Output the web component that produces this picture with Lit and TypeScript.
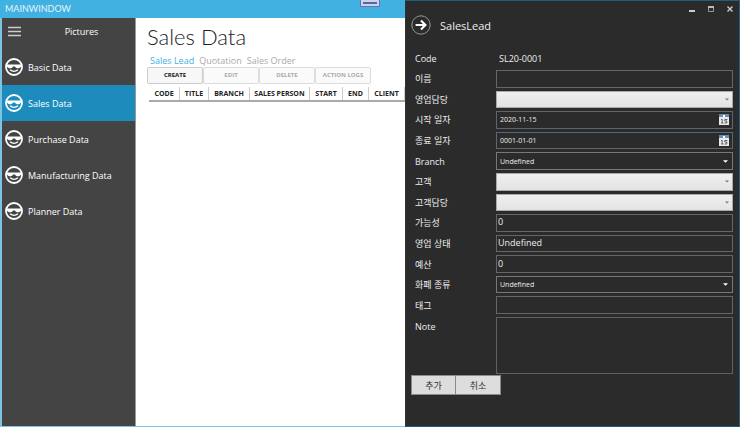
import { LitElement, html, css, svg, nothing } from "lit";
import { customElement, property, state } from "lit/decorators.js";
import { classMap } from "lit/directives/class-map.js";
import { styleMap } from "lit/directives/style-map.js";

const face = svg`
  <circle cx="9" cy="9" r="8" fill="none" stroke="#fff" stroke-width="1.8"></circle>
  <path d="M2 6.4 H16 V8.2 C15.2 10.8 11 11.2 9.9 8.6 H8.1 C7 11.2 2.8 10.8 2 8.2 Z" fill="#fff"></path>
  <path d="M5 11.8 Q9 15 13 11.8" fill="none" stroke="#fff" stroke-width="1.4"></path>`;

interface Field {
  id: string;
  label: string;
  kind: "text" | "light" | "dark" | "date";
  value?: string;
}

const fields: Field[] = [
  { id: "name", label: "이름", kind: "text" },
  { id: "sales", label: "영업담당", kind: "light" },
  { id: "start", label: "시작 일자", kind: "date", value: "2020-11-15" },
  { id: "end", label: "종료 일자", kind: "date", value: "0001-01-01" },
  { id: "branch", label: "Branch", kind: "dark", value: "Undefined" },
  { id: "client", label: "고객", kind: "light" },
  { id: "contact", label: "고객담당", kind: "light" },
  { id: "chance", label: "가능성", kind: "text", value: "0" },
  { id: "status", label: "영업 상태", kind: "text", value: "Undefined" },
  { id: "budget", label: "예산", kind: "text", value: "0" },
  { id: "currency", label: "화폐 종류", kind: "dark", value: "Undefined" },
  { id: "tag", label: "태그", kind: "text" },
];

const columns = [
  { name: "CODE", width: 31 },
  { name: "TITLE", width: 29 },
  { name: "BRANCH", width: 41 },
  { name: "SALES PERSON", width: 60 },
  { name: "START", width: 33 },
  { name: "END", width: 26 },
  { name: "CLIENT", width: 36 },
];

const reset = css`
  * { box-sizing: border-box; }
  button, input, select, textarea {
    font: inherit; color: inherit; margin: 0; padding: 0; border: 0;
    border-radius: 0; background: none; appearance: none; outline: none;
  }
`;

@customElement("side-nav")
export class SideNav extends LitElement {
  @state() current = "Sales Data";
  items = ["Basic Data", "Sales Data", "Purchase Data", "Manufacturing Data", "Planner Data"];

  static styles = [reset, css`
    :host { display: block; background: #444; color: #fff; border-right: 1px solid #999; }
    .head { display: flex; align-items: center; height: 31px; padding: 0 5px 4px 6px; }
    .menu { display: flex; width: 13px; height: 11px; }
    .title { flex: 1; text-align: center; padding-left: 12px; }
    .item {
      display: flex; align-items: center; gap: 5px; height: 36px; padding: 0 3px;
      color: #fff; text-decoration: none; white-space: nowrap;
    }
    .active { background: #1d8cbd; }
  `];

  render() {
    return html`
      <div class="head">
        <button class="menu" aria-label="Menu">
          <svg width="13" height="11" viewBox="0 0 13 11">
            <path d="M0 1.5H13M0 5.5H13M0 9.5H13" stroke="#ccc" stroke-width="1.4"></path>
          </svg>
        </button>
        <span class="title">Pictures</span>
      </div>
      <nav>
        ${this.items.map((t) => html`
          <a href="#" class=${classMap({ item: true, active: t === this.current })}
            @click=${() => (this.current = t)}>
            <svg width="18" height="18" viewBox="0 0 18 18">${face}</svg>${t}
          </a>`)}
      </nav>`;
  }
}

@customElement("sales-view")
export class SalesView extends LitElement {
  static styles = [reset, css`
    :host { display: block; min-width: 0; overflow: hidden; padding: 0 0 0 11px; }
    h1 {
      margin: 0; padding-top: 2px; font-family: Lato, "Open Sans", sans-serif;
      font-size: 22px; font-weight: 300; line-height: 34px; color: #222;
    }
    .tabs { display: flex; gap: 5px; padding-left: 3px; line-height: 14px; }
    .tabs a { color: #aaa; text-decoration: none; white-space: nowrap; }
    .tabs .on { color: #41b1e1; }
    .bar { display: flex; padding-bottom: 3px; margin-top: -1px; font-size: 6px; font-weight: 700; }
    .bar button {
      width: 56px; height: 17px; border: 1px solid #ddd; border-radius: 2px;
      background: #fafafa; color: #aaa;
    }
    .bar button:first-child { background: #f7f7f7; border-color: #ccc; color: #111; }
    table {
      table-layout: fixed; width: 256px; margin-left: 2px; border-collapse: separate;
      border-spacing: 0; font-size: 7px; line-height: 13px; color: #222;
    }
    th { padding: 0; text-align: center; white-space: nowrap; border-right: 1px solid #ccc; }
    thead { box-shadow: 0 2px 0 #aaa; }
  `];

  render() {
    return html`
      <h1>Sales Data</h1>
      <nav class="tabs">
        <a class="on" href="#">Sales Lead</a><a href="#">Quotation</a><a href="#">Sales Order</a>
      </nav>
      <div class="bar">
        <button>CREATE</button><button disabled>EDIT</button>
        <button disabled>DELETE</button><button disabled>ACTION LOGS</button>
      </div>
      <table>
        <colgroup>${columns.map((c) => html`<col style=${styleMap({ width: c.width + "px" })}>`)}</colgroup>
        <thead><tr>${columns.map((c) => html`<th scope="col">${c.name}</th>`)}</tr></thead>
      </table>`;
  }
}

@customElement("lead-flyout")
export class LeadFlyout extends LitElement {
  @property() code = "SL20-0001";

  static styles = [reset, css`
    :host {
      display: block; background: #2b2b2b; color: #eee; padding: 0 6px 0 5px;
      border: 1px solid #1f5f7c; border-left: 1px solid #333;
    }
    .window { display: flex; justify-content: flex-end; gap: 13px; height: 14px; }
    .window button { width: 6px; height: 15px; display: grid; place-items: center; }
    .head { display: flex; align-items: center; gap: 9px; height: 20px; font-size: 11px; }
    .back { width: 20px; height: 20px; }
    .back svg { display: block; }
    h2 { margin: 0; font: inherit; }
    .form { display: grid; grid-template-columns: 81px minmax(0, 1fr); row-gap: 3px; padding: 14px 0 1px 4px; }
    .row { display: grid; grid-column: 1 / -1; grid-template-columns: subgrid; }
    .code { height: 18px; align-items: center; }
    .code output { padding-left: 3px; }
    .fields {
      display: grid; grid-column: 1 / -1; grid-template-columns: subgrid;
      grid-template-rows: repeat(12, minmax(0, 1fr)); row-gap: 3px; height: 244px;
    }
    label { align-self: center; }
    .box { display: flex; min-width: 0; min-height: 0; border: 1px solid #666; }
    .box input { flex: 1; min-width: 0; }
    .text { padding: 0 1px 2px; }
    .date { border-color: #5a6670; padding: 0 3px 1px 3px; align-items: center; font-size: 7px; }
    .date button { width: 10px; height: 11px; }
    .date svg { display: block; }
    .pick { display: grid; align-items: center; font-size: 7px; border-color: #777; }
    .pick select { grid-area: 1 / 1; width: 100%; height: 100%; padding-left: 3px; }
    .pick svg { grid-area: 1 / 1; justify-self: end; margin-right: 4px; pointer-events: none; }
    .light { border-color: #aaa; background: linear-gradient(#f0f0f0, #e3e3e3); color: #333; }
    .light svg { margin-right: 3px; }
    .note label { align-self: start; line-height: 19px; }
    .note textarea { display: block; width: 100%; height: 57px; border: 1px solid #606060; resize: none; }
    .actions { display: flex; }
    .actions button {
      width: 45px; height: 20px; background: #ddd; color: #333; border: 1px solid #8a8a8a;
    }
    .actions button + button { border-left: 0; }
  `];

  control(f: Field) {
    if (f.kind === "text")
      return html`<div class="box text"><input id=${f.id} .value=${f.value ?? ""}></div>`;
    if (f.kind === "date")
      return html`<div class="box date"><input id=${f.id} .value=${f.value ?? ""}>
        <button type="button" aria-label="Open calendar"><svg width="10" height="11" viewBox="0 0 10 11">
          <rect width="10" height="11" fill="#e9e9e9"></rect>
          <rect width="10" height="3" fill="#5f8fbd"></rect>
          <path d="M4 1H6V3H4Z" fill="#fff"></path>
          <path d="M2 5.5H3.2V9M2 9H4.4M8.4 5.5H5.8V7H7.8V9H5.5" fill="none" stroke="#555" stroke-width="0.9"></path>
        </svg></button></div>`;
    const light = f.kind === "light";
    return html`<div class=${classMap({ box: true, pick: true, light })}>
      <select id=${f.id}>${f.value ? html`<option>${f.value}</option>` : nothing}</select>
      <svg width=${light ? 4 : 5} height="3" viewBox="0 0 6 3"><path d="M0 0H6L3 3Z" fill=${light ? "#777" : "#fff"}></path></svg>
    </div>`;
  }

  render() {
    return html`
      <div class="window">
        <button aria-label="Minimize"><svg width="6" height="8"><path d="M0 6H6" stroke="#ccc" stroke-width="2"></path></svg></button>
        <button aria-label="Maximize"><svg width="6" height="6"><path d="M.5 1V5.5H5.5V1" fill="none" stroke="#999"></path><path d="M0 1H6" stroke="#bbb" stroke-width="2"></path></svg></button>
        <button aria-label="Close"><svg width="6" height="6"><path d="M.5 .5L5.5 5.5M5.5 .5L.5 5.5" stroke="#ccc" stroke-width="1.4"></path></svg></button>
      </div>
      <div class="head">
        <button class="back" aria-label="Close panel"><svg width="20" height="20" viewBox="0 0 20 20">
          <circle cx="10" cy="10" r="9.2" fill="none" stroke="#999" stroke-width="1"></circle>
          <path d="M4.6 10H14M10 5.6L14.4 10L10 14.4" fill="none" stroke="#fff" stroke-width="2.1"></path>
        </svg></button>
        <h2>SalesLead</h2>
      </div>
      <form class="form" @submit=${(e: Event) => e.preventDefault()}>
        <div class="row code"><label for="code">Code</label><output id="code">${this.code}</output></div>
        <div class="fields">${fields.map((f) => html`<label for=${f.id}>${f.label}</label>${this.control(f)}`)}</div>
        <div class="row note"><label for="note">Note</label><textarea id="note"></textarea></div>
      </form>
      <div class="actions"><button>추가</button><button>취소</button></div>`;
  }
}

@customElement("app-root")
export class AppRoot extends LitElement {
  static styles = [reset, css`
    :host {
      display: grid; box-sizing: border-box; min-height: 100vh; background: #fff;
      grid-template: 18px minmax(0, 1fr) / 136px minmax(0, 1fr) 335px;
      font: 9px/13px "Open Sans", "Noto Sans CJK KR", sans-serif;
    }
    header {
      grid-area: 1 / 1 / 2 / 4; display: grid; grid-template-columns: 1fr auto 1fr;
      background: #41b1e1; color: #e4f5fc; padding-left: 5px;
      font-family: Lato, "Open Sans", sans-serif; line-height: 18px;
    }
    .grip {
      width: 20px; height: 7px; border: 1px solid #6674a8; border-top: 0; background: #c9d3f0;
      display: grid; place-items: center; margin-right: 5px;
    }
    .grip i { width: 14px; height: 2px; background: #5a6798; }
    side-nav { grid-area: 2 / 1; border-left: 2px solid #7cc4e4; border-bottom: 1px solid #7cc4e4; }
    sales-view { grid-area: 2 / 2; border-bottom: 1px solid #7cc4e4; }
    lead-flyout { grid-area: 1 / 3 / 3 / 4; }
  `];

  render() {
    return html`
      <header><span>MAINWINDOW</span><span class="grip"><i></i></span></header>
      <side-nav></side-nav>
      <sales-view></sales-view>
      <lead-flyout></lead-flyout>`;
  }
}
